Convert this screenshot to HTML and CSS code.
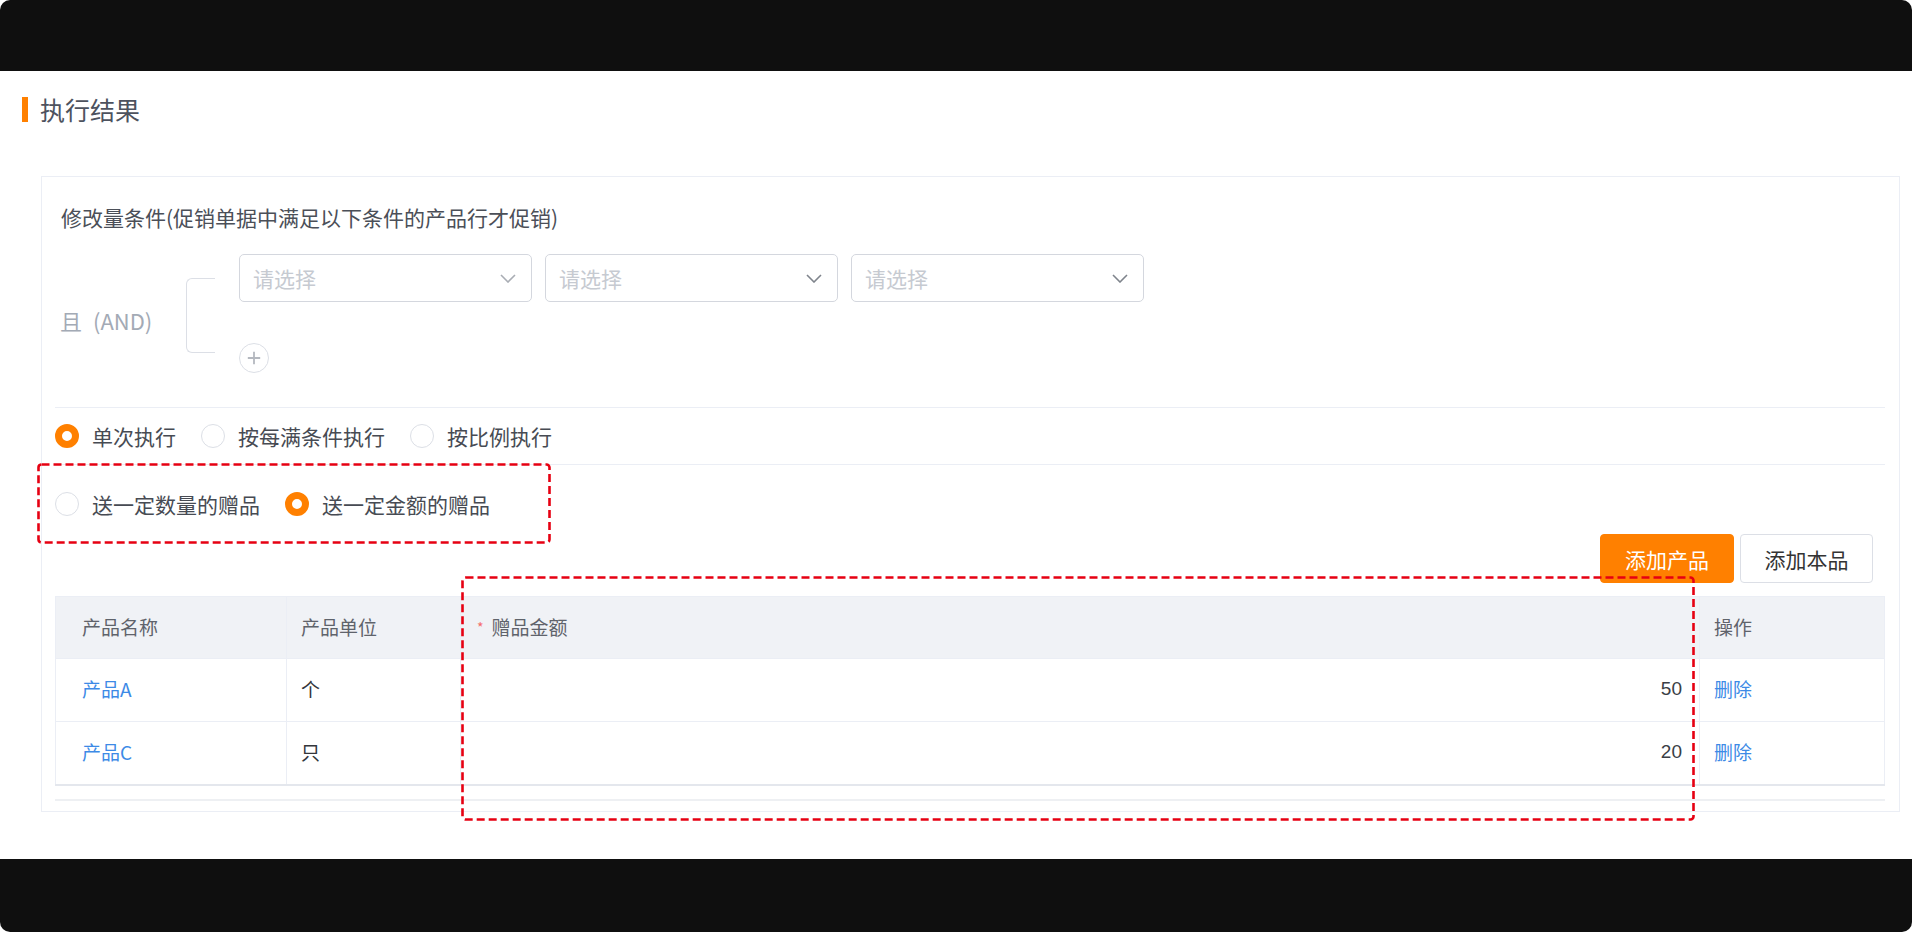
FILE: index.html
```html
<!DOCTYPE html>
<html lang="zh-CN">
<head>
    <meta charset="UTF-8">
    <title>执行结果</title>
    <link rel="stylesheet" href="styles.css">
</head>
<body>
    <div class="topbar"></div>

    <div class="page">
        <!-- Section Title -->
        <div class="section-title">执行结果</div>

        <div class="card">
            <div class="cond-title">修改量条件(促销单据中满足以下条件的产品行才促销)</div>

            <!-- Condition Group -->
            <div class="cond">
                <div class="logic">且&ensp;(AND)</div>
                <div class="bracket"></div>
                <div class="cond-items">
                    <div class="selects">
                        <div class="select"><span>请选择</span>
                            <svg class="chevron light" viewBox="0 0 16 9"><polyline points="1,1 8,8 15,1"/></svg>
                        </div>
                        <div class="select"><span>请选择</span>
                            <svg class="chevron" viewBox="0 0 16 9"><polyline points="1,1 8,8 15,1"/></svg>
                        </div>
                        <div class="select"><span>请选择</span>
                            <svg class="chevron" viewBox="0 0 16 9"><polyline points="1,1 8,8 15,1"/></svg>
                        </div>
                    </div>
                    <div class="add-btn">
                        <svg viewBox="0 0 16 16"><path d="M8 2.5v11M2.5 8h11"/></svg>
                    </div>
                </div>
            </div>

            <div class="divider"></div>

            <div class="radio-row first">
                <label class="radio-item"><span class="radio checked"></span>单次执行</label>
                <label class="radio-item"><span class="radio"></span>按每满条件执行</label>
                <label class="radio-item"><span class="radio"></span>按比例执行</label>
            </div>

            <div class="divider"></div>

            <div class="radio-row second">
                <label class="radio-item"><span class="radio"></span>送一定数量的赠品</label>
                <label class="radio-item"><span class="radio checked"></span>送一定金额的赠品</label>
            </div>

            <!-- Toolbar -->
            <div class="toolbar">
                <button class="btn btn-primary">添加产品</button>
                <button class="btn">添加本品</button>
            </div>

            <!-- Product Table -->
            <table class="product-table">
                <colgroup>
                    <col style="width: 231px">
                    <col style="width: 174px">
                    <col style="width: 1239px">
                    <col>
                </colgroup>
                <thead>
                    <tr>
                        <th class="col-name">产品名称</th>
                        <th>产品单位</th>
                        <th class="col-amount"><span class="required">*</span>赠品金额</th>
                        <th>操作</th>
                    </tr>
                </thead>
                <tbody>
                    <tr>
                        <td class="col-name"><a class="link">产品A</a></td>
                        <td>个</td>
                        <td class="num">50</td>
                        <td><a class="link">删除</a></td>
                    </tr>
                    <tr>
                        <td class="col-name"><a class="link">产品C</a></td>
                        <td>只</td>
                        <td class="num">20</td>
                        <td><a class="link">删除</a></td>
                    </tr>
                </tbody>
            </table>
            <div class="scroll-line"></div>
        </div>
    </div>

    <div class="bottombar"></div>

    <!-- Annotation boxes -->
    <svg class="mark mark-radio" width="514" height="81">
        <rect x="1.5" y="1.5" width="511" height="78" rx="3"/>
    </svg>
    <svg class="mark mark-amount" width="1234" height="245">
        <rect x="1.5" y="1.5" width="1231" height="242" rx="3"/>
    </svg>
</body>
</html>
```

FILE: styles.css
```css
body, html {
    margin: 0;
    padding: 0;
    background: #fff;
    font-family: "Noto Sans CJK SC", "Noto Sans", sans-serif;
    overflow: hidden;
}

body {
    position: relative;
    height: 932px;
}

.topbar {
    height: 71px;
    background: #0f0f0f;
    border-radius: 10px 10px 0 0;
}

.bottombar {
    height: 73px;
    background: #0f0f0f;
    border-radius: 0 0 10px 10px;
}

.page {
    height: 788px;
    box-sizing: border-box;
    padding: 25px 12px 0 22px;
}

.section-title {
    display: flex;
    align-items: center;
    height: 26px;
    line-height: 26px;
    font-size: 25px;
    color: #4d525e;
}

.section-title::before {
    content: '';
    width: 6px;
    height: 25px;
    background: #ff8000;
    margin-right: 12px;
}

.card {
    margin: 54px 0 0 19px;
    height: 636px;
    box-sizing: border-box;
    border: 1px solid #ebeef5;
    padding: 0 14px 0 13px;
}

.cond-title {
    margin-top: 25px;
    padding-left: 6px;
    font-size: 21px;
    line-height: 30px;
    color: #4b4f58;
}

.cond {
    display: flex;
    align-items: center;
    margin-top: 22px;
}

.logic {
    width: 126px;
    padding: 12px 0 0 5px;
    font-size: 22px;
    color: #a3aab5;
}

.bracket {
    width: 29px;
    height: 75px;
    margin-top: 4px;
    margin-right: 24px;
    box-sizing: border-box;
    border: 1.5px solid #dcdfe6;
    border-right: none;
    border-radius: 6px 0 0 6px;
}

.cond-items {
    display: flex;
    flex-direction: column;
}

.selects {
    display: flex;
    gap: 13px;
}

.select {
    width: 293px;
    height: 48px;
    box-sizing: border-box;
    border: 1px solid #d4d7de;
    border-radius: 5px;
    padding: 0 15px 0 13px;
    display: flex;
    align-items: center;
    justify-content: space-between;
    font-size: 21px;
    color: #c6cad1;
}

.chevron {
    width: 16px;
    height: 9px;
    fill: none;
    stroke: #7f848c;
    stroke-width: 1.6;
}

.chevron.light {
    stroke: #a9adb4;
}

.add-btn {
    width: 30px;
    height: 30px;
    margin-top: 41px;
    box-sizing: border-box;
    border: 1.5px solid #dcdfe6;
    border-radius: 50%;
    display: flex;
    align-items: center;
    justify-content: center;
}

.add-btn svg {
    width: 18px;
    height: 18px;
    fill: none;
    stroke: #b4b8bf;
    stroke-width: 1.6;
}

.divider {
    height: 1px;
    background: #ebeef5;
}

.cond + .divider {
    margin-top: 34px;
}

.radio-row {
    display: flex;
    align-items: center;
    font-size: 21px;
    line-height: 24px;
    color: #474b53;
}

.radio-row.first {
    padding: 16px 0 16px;
}

.radio-row.second {
    padding-top: 27px;
    padding-bottom: 3px;
}

.radio-item {
    display: flex;
    align-items: center;
    margin-right: 25px;
    cursor: pointer;
}

.radio {
    width: 24px;
    height: 24px;
    box-sizing: border-box;
    border: 1.5px solid #dcdfe6;
    border-radius: 50%;
    background: #fff;
    margin-right: 13px;
}

.radio.checked {
    border: 7px solid #ff8000;
}

.toolbar {
    display: flex;
    justify-content: flex-end;
    gap: 6px;
    margin-top: 15px;
    padding-right: 12px;
}

.btn {
    height: 49px;
    width: 133px;
    box-sizing: border-box;
    border: 1px solid #dcdfe6;
    border-radius: 4px;
    background: #fff;
    color: #333;
    font-family: inherit;
    font-size: 21px;
    cursor: pointer;
}

.btn-primary {
    width: 134px;
    background: #ff8000;
    border-color: #ff8000;
    color: #fff;
}

.product-table {
    width: 100%;
    margin-top: 13px;
    border-collapse: collapse;
    table-layout: fixed;
    border: 1px solid #ebeef5;
    border-bottom: 2px solid #e4e7ed;
    font-size: 19px;
}

.product-table th,
.product-table td {
    border: 1px solid #ebeef5;
    padding: 0 14px 3px;
    text-align: left;
    font-weight: normal;
}

.product-table th {
    height: 58px;
    background: #f0f2f6;
    color: #5f636b;
}

.product-table td {
    height: 59px;
    color: #33363b;
}

.product-table .col-name {
    padding-left: 26px;
}

.product-table th.col-amount {
    padding-left: 16px;
}

.required {
    color: #f56c6c;
    font-size: 14px;
    margin-right: 8px;
    vertical-align: 2px;
}

.product-table td.num {
    text-align: right;
    padding-right: 17px;
    font-family: "Liberation Sans", Roboto, sans-serif;
    color: #3a3e46;
}

.link {
    color: #3d8ae6;
    cursor: pointer;
}

.scroll-line {
    height: 2px;
    margin-top: 13px;
    background: #eef0f3;
}

.mark {
    position: absolute;
    pointer-events: none;
    fill: none;
    stroke: #e60012;
    stroke-width: 2.6;
    stroke-dasharray: 8 4;
}

.mark-radio {
    left: 37px;
    top: 463px;
}

.mark-amount {
    left: 461px;
    top: 576px;
}
```
